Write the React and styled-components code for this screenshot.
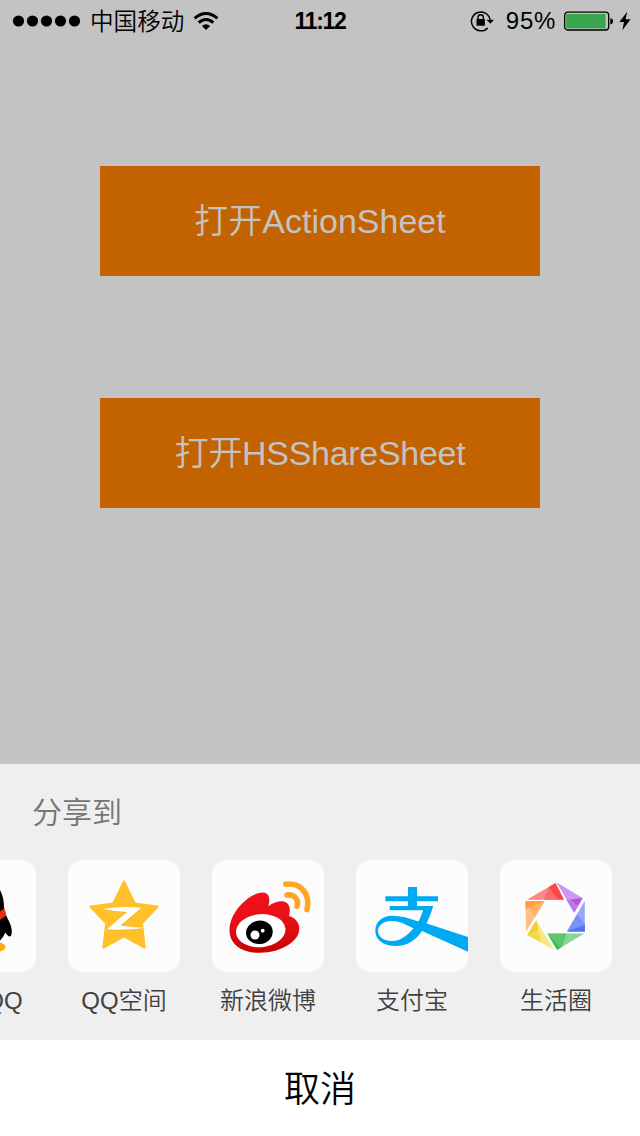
import React from "react";
import styled, { createGlobalStyle } from "styled-components";

const GlobalStyle = createGlobalStyle`
  * { box-sizing: border-box; }
  html, body { margin: 0; padding: 0; }
  body { font-family: "Liberation Sans", "Noto Sans CJK SC", sans-serif; font-weight: 350; }
  svg { display: block; flex: none; }
`;

const Screen = styled.div`
  width: 640px;
  height: 1136px;
  display: flex;
  flex-direction: column;
  background: #c3c3c3;
  overflow: hidden;
`;

const StatusBar = styled.header`
  display: grid;
  grid-template-columns: 1fr auto 1fr;
  align-items: center;
  height: 41px;
  padding: 0 9px;
  color: #000;
  font-size: 24px;
  line-height: 38px;
  white-space: nowrap;
`;

const StatusGroup = styled.div`
  display: flex;
  align-items: center;
  justify-content: ${(p) => (p.$end ? "flex-end" : "flex-start")};
  padding-left: ${(p) => (p.$end ? 0 : "3px")};
`;

const Carrier = styled.span`
  margin: 0 9px 0 9px;
  padding-top: 2px;
  font-size: 23.6px;
`;

const Clock = styled.span`
  padding-top: 1px;
  font-size: 23px;
  font-weight: 700;
  letter-spacing: -1.3px;
`;

const Percent = styled.span`
  margin: 0 8px 0 11px;
  padding-top: 1px;
  letter-spacing: 0.7px;
`;

const Content = styled.main`
  flex: 1;
  display: flex;
  flex-direction: column;
  align-items: center;
  gap: 122px;
  padding-top: 125px;
`;

const OpenButton = styled.button`
  width: 440px;
  height: 110px;
  padding: 0;
  border: 0;
  background: #c36200;
  color: #c3c3c3;
  font-family: inherit;
  font-weight: inherit;
  font-size: 34px;
  line-height: 110px;
  letter-spacing: ${(p) => p.$tracking || "normal"};
`;

const Sheet = styled.section`
  height: 276px;
  background: #efefef;
  overflow: hidden;
`;

const SheetTitle = styled.h2`
  margin: 0;
  padding: 25px 32px 0;
  height: 96px;
  color: #757575;
  font-size: 30px;
  font-weight: inherit;
  line-height: 48px;
`;

const ShareRow = styled.div`
  display: flex;
  gap: 32px;
  margin-left: -76px;
`;

const ShareItem = styled.div`
  flex: none;
  width: 112px;
  display: flex;
  flex-direction: column;
  align-items: center;
`;

const IconTile = styled.div`
  width: 112px;
  height: 112px;
  border-radius: 14px;
  background: #fcfcfc;
  overflow: hidden;
`;

const ShareLabel = styled.span`
  margin-top: 12px;
  color: #404040;
  font-size: 24px;
  line-height: 34px;
  white-space: nowrap;
`;

const CancelButton = styled.button`
  height: 96px;
  padding: 3px 0 0;
  border: 0;
  background: #fff;
  color: #000;
  font-family: inherit;
  font-weight: inherit;
  font-size: 36px;
  line-height: 93px;
`;

const SignalDots = () => (
  <svg width="69" height="12" viewBox="0 0 69 12">
    {[6.5, 20.5, 34.5, 48.5, 62.5].map((x) => (
      <circle key={x} cx={x} cy="6" r="5.6" />
    ))}
  </svg>
);

const WifiIcon = () => (
  <svg width="26" height="20" viewBox="0 0 26 20">
    <g fill="none" stroke="#000" strokeWidth="3">
      <path d="M1.6 7.3Q7 2.4 13 2.4T24.4 7.3" />
      <path d="M5.7 11.7Q9 8.5 13 8.5T20.3 11.7" />
    </g>
    <path d="M8.9 15Q13 11.6 17.1 15L13 19Z" />
  </svg>
);

const LockIcon = () => (
  <svg width="25" height="22" viewBox="0 0 25 22">
    <path d="M17.7 17.9A9.4 9.4 0 1 1 20.1 9.6" fill="none" stroke="#000" strokeWidth="1.5" />
    <path d="M16.5 9.8H24L20.4 13.8Z" />
    <rect x="6.5" y="9" width="8.4" height="6.8" rx=".6" />
    <path d="M8 9.5V7.5a2.7 2.7 0 0 1 5.4 0V9.5" fill="none" stroke="#000" strokeWidth="1.4" />
  </svg>
);

const BatteryIcon = () => (
  <svg width="50" height="20" viewBox="0 0 50 20">
    <rect x=".7" y="1.2" width="44" height="17.8" rx="3" fill="none" stroke="#000" strokeWidth="1.3" />
    <rect x="2.2" y="3" width="39.4" height="14.4" fill="#3ba54e" />
    <path d="M46.3 7.2Q49 7.4 49 10.3T46.3 13.4Z" />
  </svg>
);

const BoltSvg = styled.svg`
  margin-left: 5px;
`;

const BoltIcon = () => (
  <BoltSvg width="12" height="20" viewBox="0 0 12 20">
    <path d="M8.2 .8L.3 11H5L3.4 19.2L11.5 8.3H6.6Z" />
  </BoltSvg>
);

const QQIcon = () => (
  <svg width="112" height="112" viewBox="0 0 112 112">
    <ellipse cx="43" cy="87" rx="13" ry="5.3" fill="#faab07" />
    <ellipse cx="69" cy="87" rx="12.5" ry="5.3" fill="#faab07" />
    <path d="M56 19C40 19 32 30 32 44C31 54 24 64 24 72C24 78 27 77 30 72C33 82 43 88 56 88C66 88 74 84 79 77L81.3 72.5C85 78 87.5 78 87.8 72C88 65 84 60 82 55L80 49C80 42 79.5 37 76 30C72 22 65 19 56 19Z" />
    <path d="M56 50C44 50 35 57 36 68C37 78 45 84 56 84S74 78 75 68C76 57 68 50 56 50Z" fill="#fff" />
    <path d="M31 48Q56 60 76 51.5L80.5 48L82.3 55.5L76 60Q56 67 30 56Z" fill="#e92a10" />
    <ellipse cx="49" cy="34" rx="5" ry="7" fill="#fff" />
    <ellipse cx="63" cy="34" rx="5" ry="7" fill="#fff" />
    <circle cx="51" cy="35" r="2" />
    <circle cx="61" cy="35" r="2" />
    <ellipse cx="56" cy="46" rx="13" ry="4" fill="#faab07" />
  </svg>
);

const QzoneIcon = () => (
  <svg width="112" height="112" viewBox="0 0 112 112">
    <path
      d="M56 21.7L66.5 43.6L89.4 46.7L73.8 63.2L76.5 87.4L56 76.3L35.5 87.4L38.4 63.2L22.6 46.7L45.5 43.6Z"
      fill="#ffc02a"
      stroke="#ffc02a"
      strokeWidth="2.4"
      strokeLinejoin="round"
    />
    <path d="M34.5 49Q51 46.5 73.8 48.2L53.5 65.8Q66 67 78.5 68.2Q61 71.5 39 69.9L58.7 52.8Q46 52 34.5 49Z" fill="#cf8e16" opacity=".3" />
    <path d="M34.3 49Q51 46 73.5 47.7L52.5 65.4Q66 67.6 78.3 67.7Q60 70.7 39 69.2L59.2 52Q46 51.5 34.3 49Z" fill="#fff" />
  </svg>
);

const WeiboIcon = () => (
  <svg width="112" height="112" viewBox="0 0 112 112">
    <defs>
      <linearGradient id="weiboRed" x1="0" y1="0" x2="0" y2="1">
        <stop offset="0" stopColor="#f0141c" />
        <stop offset=".5" stopColor="#e60f17" />
        <stop offset="1" stopColor="#c80404" />
      </linearGradient>
    </defs>
    <path
      d="M50.5 32.6C57 32.6 58.6 38 56.4 46C63 41.5 71 39.8 75 43C78.2 46 78.4 51 77 56C83 58 87.5 62 87.3 69C87 81 70 92.5 48 92.8C29 93 17.5 84 17.5 70C17.5 52 37 33 50.5 32.6Z"
      fill="url(#weiboRed)"
    />
    <ellipse cx="48.7" cy="70.7" rx="24.8" ry="16.5" transform="rotate(-5 48.7 70.7)" fill="#fff" />
    <ellipse cx="47.4" cy="72.3" rx="13.4" ry="11.7" transform="rotate(-8 47.4 72.3)" />
    <circle cx="43" cy="75" r="4.5" fill="#fff" />
    <circle cx="50.7" cy="70.7" r="1.9" fill="#fff" />
    <g fill="none" stroke="#ffa526" strokeWidth="5.6" strokeLinecap="round">
      <path d="M73.8 24.2C89 22.5 98.6 34 95 49.6" />
      <path d="M75 35C82 34 87 39 85 46.3" />
    </g>
  </svg>
);

const AlipayIcon = () => (
  <svg width="112" height="112" viewBox="0 0 112 112" fill="#00a9f2">
    <path
      d="M52 27H61V36.3H82V41.3H61V46.1H77.2C75 54 72 60 70.7 63.6L112 77V91.7L66 71C60 80 51 86 40 86C28 86 19.3 80 19.3 71C19.3 61 27 55.7 36 55.7C45 55.7 53 58 62.3 61.4C65 57 66 53.5 67 50.3H33.7V46.1H52V41.3H29.4V36.3H52ZM57.4 68.3C49 64 43 60.8 35 61C26.5 61.3 22 66 22 71C22 77 28 81 36 81C45 81 52 75 57.4 68.3Z"
      fillRule="evenodd"
    />
  </svg>
);

const LifeCircleIcon = () => (
  <svg width="112" height="112" viewBox="0 0 112 112">
    <path d="M55.5 23L27 39.7H64Z" fill="#ff8586" />
    <path d="M48.5 27.2L55.5 23L64 39.7H58Z" fill="#ff4648" />
    <path d="M48.5 27.2L44 39.7H58Z" fill="#fb6b6b" />
    <path d="M56.5 22.3L82.5 38L74.3 52.7Z" fill="#cd98f1" />
    <path d="M66.5 40L82.5 38L74.3 52.7Z" fill="#bd77eb" />
    <path d="M70 39.6L82.5 38L78 45.5Z" fill="#ae56e5" />
    <path d="M84.8 40.7V71.6H67Z" fill="#96a9f7" />
    <path d="M77 54.5L84.8 64V71.6H67Z" fill="#7893f5" />
    <path d="M84.8 65L67 71.6H84.8Z" fill="#5073f4" />
    <path d="M47.5 73.5H84.5L57 89.8Z" fill="#86d796" />
    <path d="M47.5 73.5H66.5L62 87L57 89.8Z" fill="#5fc573" />
    <path d="M47.5 73.5L60.5 87.7L57 89.8Z" fill="#3cbb52" />
    <path d="M36.2 60.5L27.3 75L54 89.8Z" fill="#f8e680" />
    <path d="M36.2 60.5L41 82.6L27.3 75Z" fill="#f4d953" />
    <path d="M36.2 60.5L38.5 70L27.3 75Z" fill="#efd02f" />
    <path d="M25.5 41.2H44.5L26 71.7Z" fill="#ffbf80" />
    <path d="M25.5 41.2H44.5L35 57Z" fill="#ffb064" />
    <path d="M25.5 41.2H44.5L25.5 49Z" fill="#ffa03d" />
  </svg>
);

const targets = [
  { label: "手机QQ", Icon: QQIcon },
  { label: "QQ空间", Icon: QzoneIcon },
  { label: "新浪微博", Icon: WeiboIcon },
  { label: "支付宝", Icon: AlipayIcon },
  { label: "生活圈", Icon: LifeCircleIcon },
];

export default function App() {
  return (
    <Screen>
      <GlobalStyle />
      <StatusBar>
        <StatusGroup>
          <SignalDots />
          <Carrier>中国移动</Carrier>
          <WifiIcon />
        </StatusGroup>
        <Clock>11:12</Clock>
        <StatusGroup $end>
          <LockIcon />
          <Percent>95%</Percent>
          <BatteryIcon />
          <BoltIcon />
        </StatusGroup>
      </StatusBar>
      <Content>
        <OpenButton>打开ActionSheet</OpenButton>
        <OpenButton $tracking="-0.3px">打开HSShareSheet</OpenButton>
      </Content>
      <Sheet>
        <SheetTitle>分享到</SheetTitle>
        <ShareRow>
          {targets.map(({ label, Icon }) => (
            <ShareItem key={label}>
              <IconTile>
                <Icon />
              </IconTile>
              <ShareLabel>{label}</ShareLabel>
            </ShareItem>
          ))}
        </ShareRow>
      </Sheet>
      <CancelButton>取消</CancelButton>
    </Screen>
  );
}
